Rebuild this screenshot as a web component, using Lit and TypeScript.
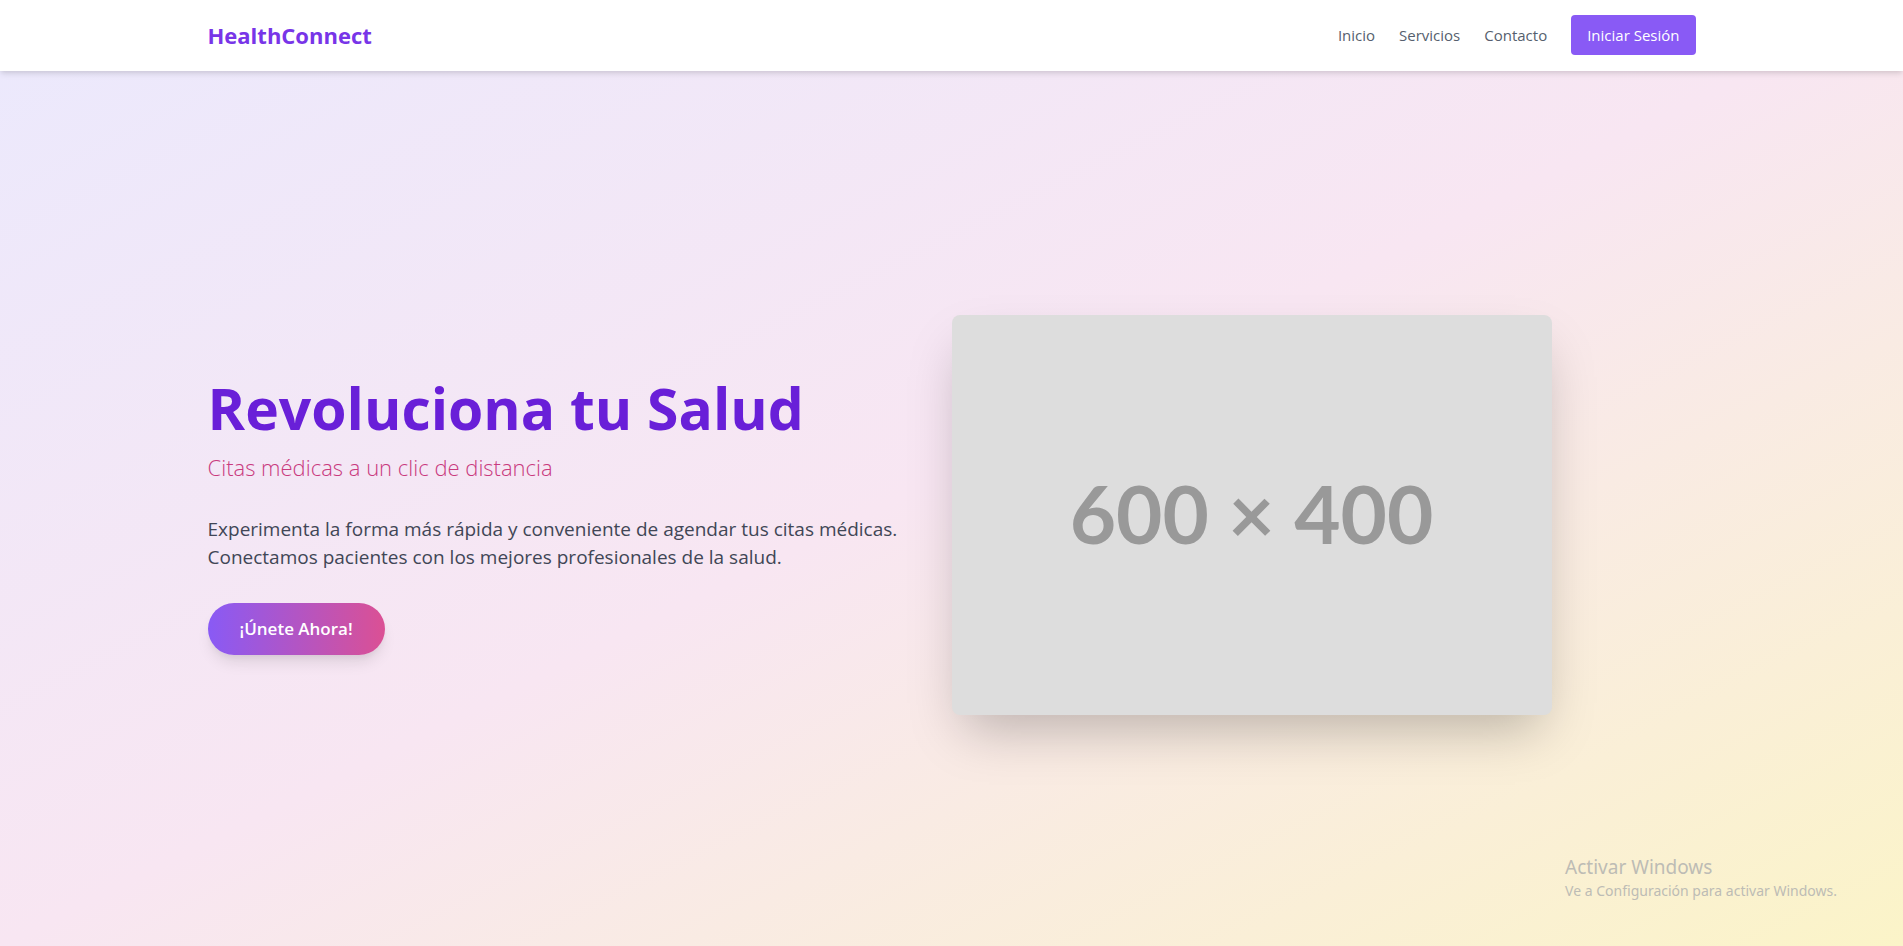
import { LitElement, html, css } from "lit";
import { customElement } from "lit/decorators.js";

const links = ["Inicio", "Servicios", "Contacto"];

@customElement("app-header")
export class AppHeader extends LitElement {
  static styles = css`
    :host {
      display: block;
      position: relative;
      z-index: 1;
      background: #fff;
      box-shadow: 0 4px 6px -1px rgba(0, 0, 0, 0.1), 0 2px 4px -1px rgba(0, 0, 0, 0.06);
    }
    .bar {
      box-sizing: border-box;
      max-width: 1536px;
      margin: 0 auto;
      padding: 15px 24px 16px;
      display: flex;
      align-items: center;
      justify-content: space-between;
    }
    .brand {
      font-size: 22px;
      line-height: 32px;
      font-weight: 700;
      color: #7835e8;
      text-decoration: none;
    }
    .nav {
      display: flex;
      align-items: center;
      gap: 24px;
      font-size: 15px;
      line-height: 24px;
    }
    .link {
      color: #565f6e;
      text-decoration: none;
    }
    .login {
      font: inherit;
      font-weight: 500;
      color: #fff;
      background: #895af5;
      border: 0;
      border-radius: 4px;
      padding: 8px 16px;
      cursor: pointer;
    }
  `;

  render() {
    return html`
      <header class="bar">
        <a class="brand" href="#">HealthConnect</a>
        <nav class="nav">
          ${links.map((l) => html`<a class="link" href="#${l.toLowerCase()}">${l}</a>`)}
          <button class="login" type="button">Iniciar Sesión</button>
        </nav>
      </header>
    `;
  }
}

@customElement("app-root")
export class AppRoot extends LitElement {
  static styles = css`
    :host {
      display: flex;
      flex-direction: column;
      min-height: 100vh;
      position: relative;
      font-family: "Segoe UI", "Open Sans", "Noto Sans", sans-serif;
      background: linear-gradient(to bottom right, #ebe9fd, #f8e6f2, #fbf4c8);
    }
    .hero {
      flex: 1;
      box-sizing: border-box;
      width: 100%;
      max-width: 1536px;
      margin: 0 auto;
      padding: 13px 24px 0;
      display: grid;
      grid-template-columns: 1fr 1fr;
      align-items: center;
    }
    .title {
      margin: 0;
      font-size: 57px;
      line-height: 65px;
      font-weight: 700;
      color: #691fd8;
    }
    .subtitle {
      margin: 10px 0 32px;
      font-size: 22px;
      line-height: 32px;
      font-weight: 300;
      color: #c93a7e;
    }
    .text {
      margin: 0 0 32px;
      font-size: 19px;
      line-height: 28px;
      color: #414656;
    }
    .join {
      font: inherit;
      font-size: 17px;
      line-height: 28px;
      font-weight: 600;
      color: #fff;
      background: linear-gradient(to right, #895af5, #db5094);
      border: 0;
      border-radius: 9999px;
      padding: 12px 32px;
      box-shadow: 0 10px 15px -3px rgba(0, 0, 0, 0.1), 0 4px 6px -2px rgba(0, 0, 0, 0.05);
      cursor: pointer;
    }
    .picture {
      box-sizing: border-box;
      width: 100%;
      max-width: 600px;
      aspect-ratio: 3 / 2;
      padding-bottom: 4px;
      display: grid;
      place-items: center;
      border-radius: 8px;
      background: #ddd;
      color: #999;
      font-family: Lato, sans-serif;
      font-size: 80px;
      line-height: 96px;
      font-weight: 700;
      box-shadow: 0 25px 50px -12px rgba(0, 0, 0, 0.25);
    }
    .notice {
      position: absolute;
      right: 66px;
      bottom: 45px;
      color: #bdbcb5;
      font-family: "Segoe UI", "Noto Sans", sans-serif;
      font-size: 14px;
      line-height: 20px;
    }
    .notice-title {
      font-size: 19px;
      line-height: 27px;
    }
    .notice p {
      margin: 0;
    }
  `;

  render() {
    return html`
      <app-header></app-header>
      <main class="hero">
        <section>
          <h1 class="title">Revoluciona tu Salud</h1>
          <p class="subtitle">Citas médicas a un clic de distancia</p>
          <p class="text">
            Experimenta la forma más rápida y conveniente de agendar tus citas médicas.
            Conectamos pacientes con los mejores profesionales de la salud.
          </p>
          <button class="join" type="button">¡Únete Ahora!</button>
        </section>
        <div class="picture">600 × 400</div>
      </main>
      <aside class="notice">
        <p class="notice-title">Activar Windows</p>
        <p>Ve a Configuración para activar Windows.</p>
      </aside>
    `;
  }
}
